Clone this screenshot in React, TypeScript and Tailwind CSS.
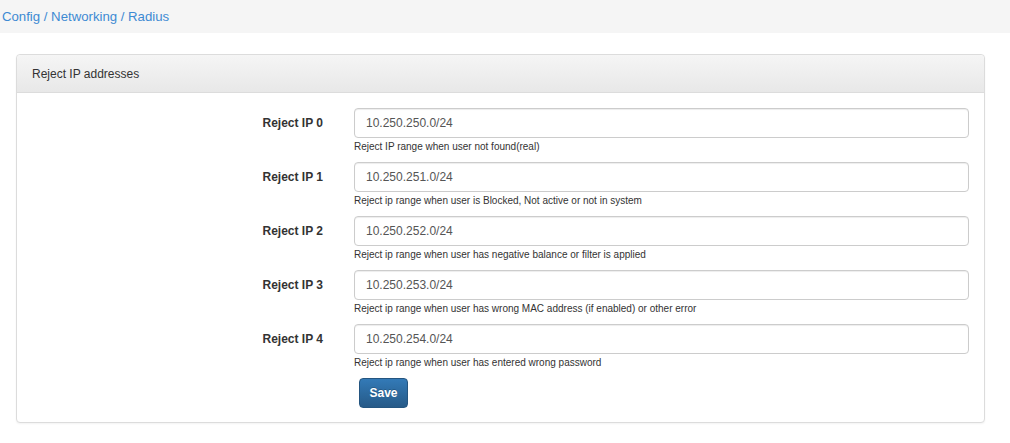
const ROWS = [
  { label: "Reject IP 0", value: "10.250.250.0/24", help: "Reject IP range when user not found(real)" },
  { label: "Reject IP 1", value: "10.250.251.0/24", help: "Reject ip range when user is Blocked, Not active or not in system" },
  { label: "Reject IP 2", value: "10.250.252.0/24", help: "Reject ip range when user has negative balance or filter is applied" },
  { label: "Reject IP 3", value: "10.250.253.0/24", help: "Reject ip range when user has wrong MAC address (if enabled) or other error" },
  { label: "Reject IP 4", value: "10.250.254.0/24", help: "Reject ip range when user has entered wrong password" },
];

export default function App() {
  return (
    <div className="min-h-[443px] bg-white font-['Liberation_Sans',Arial,sans-serif] text-[#333]">
      <div className="flex h-[33px] items-center bg-[#f5f5f5] px-[2px]">
        <span className="text-[13.2px] text-[#3d8ad3]">Config / Networking / Radius</span>
      </div>

      <div className="ml-[16px] mt-[21px] w-[969px] rounded-[4px] border border-[#dcdcdc] bg-white shadow-[0_1px_2px_rgba(0,0,0,0.05)]">
        <div className="flex h-[38px] items-center rounded-t-[4px] border-b border-[#dcdcdc] bg-gradient-to-b from-[#f5f5f5] to-[#e8e8e8] px-[15px]">
          <span className="text-[12px] text-[#333]">Reject IP addresses</span>
        </div>

        <div className="pb-[14px] pt-[15px]">
          <div className="flex flex-col gap-[8px]">
            {ROWS.map((row) => (
              <div key={row.label} className="flex">
                <div className="flex h-[30px] w-[306px] items-center justify-end">
                  <span className="text-[12px] font-bold text-[#333]">{row.label}</span>
                </div>
                <div className="ml-[31px] mr-[15px] flex-1">
                  <input
                    readOnly
                    value={row.value}
                    className="h-[30px] w-full rounded-[4px] border border-[#ccc] px-[11px] text-[12px] text-[#555] shadow-[inset_0_1px_1px_rgba(0,0,0,0.075)] outline-none"
                  />
                  <p className="mt-[2px] text-[10px] leading-[14px] text-[#333]">{row.help}</p>
                </div>
              </div>
            ))}
          </div>
          <div className="ml-[342px] mt-[8px]">
            <button
              type="button"
              className="h-[30px] w-[49px] rounded-[4px] border border-[#245580] bg-gradient-to-b from-[#337ab7] to-[#265a88] text-[12px] font-bold text-white [text-shadow:0_-1px_0_rgba(0,0,0,0.2)]"
            >
              Save
            </button>
          </div>
        </div>
      </div>
    </div>
  );
}
